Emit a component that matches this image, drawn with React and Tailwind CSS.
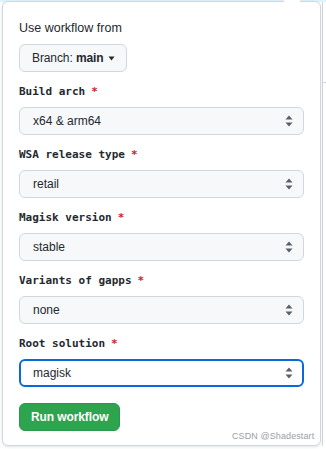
import React from 'react';

const fields = [
    { label: 'Build arch', value: 'x64 & arm64' },
    { label: 'WSA release type', value: 'retail' },
    { label: 'Magisk version', value: 'stable' },
    { label: 'Variants of gapps', value: 'none' },
    { label: 'Root solution', value: 'magisk', focused: true },
];

function UpDown() {
    return (
        <svg width="8" height="12" viewBox="0 0 8 12" className="shrink-0">
            <path d="M4 0.5 L7.5 4.5 L0.5 4.5 Z" fill="#57606a" />
            <path d="M4 11.5 L7.5 7.5 L0.5 7.5 Z" fill="#57606a" />
        </svg>
    );
}

function Field({ label, value, focused }) {
    return (
        <div className="flex flex-col">
            <div className="h-[18px] flex items-center font-['DejaVu_Sans_Mono',monospace] text-[11px] font-bold text-[#24292f]">
                {label}
                <span className="ml-[6px] text-[#cf222e]">*</span>
            </div>
            <div
                className={
                    focused
                        ? 'mt-[6px] h-[28px] rounded-[6px] border-2 border-[#0969da] bg-white flex items-center justify-between pl-[12px] pr-[9px]'
                        : 'mt-[6px] h-[28px] rounded-[6px] border border-[#d0d7de] bg-[#f6f8fa] flex items-center justify-between pl-[13px] pr-[10px]'
                }
            >
                <span className="text-[12px] text-[#24292f]">{value}</span>
                <UpDown />
            </div>
        </div>
    );
}

export default function App() {
    return (
        <div className="w-[326px] h-[449px] bg-white relative overflow-hidden font-['Liberation_Sans',sans-serif]">
            <div className="h-[2px] bg-[#ddf4ff]" />
            <div className="flex">
                <div className="ml-[2px] -mt-[1px] w-[319px] h-[445px] rounded-[6px] border border-[#d0d7de] bg-white shadow-[0_1px_3px_rgba(140,149,159,0.25)] flex flex-col px-[16px] pt-[16px] relative">
                    <div className="absolute -top-[2px] left-[281px] w-[16px] h-[4px] bg-white" />
                    <div className="h-[20px] flex items-center text-[12.5px] text-[#24292f]">Use workflow from</div>
                    <div className="mt-[6px] self-start h-[28px] rounded-[6px] border border-[#d0d7de] bg-[#f6f8fa] flex items-center pl-[12px] pr-[11px] text-[12px] text-[#24292f] tracking-[-0.1px]">
                        Branch:&nbsp;<span className="font-bold">main</span>
                        <svg width="7" height="5" viewBox="0 0 7 5" className="ml-[4px]">
                            <path d="M0.5 0.5 L6.5 0.5 L3.5 4.5 Z" fill="#24292f" />
                        </svg>
                    </div>
                    <div className="mt-[11px] flex flex-col gap-[11px]">
                        {fields.map((f) => (
                            <Field key={f.label} {...f} />
                        ))}
                    </div>
                    <button className="mt-[16px] self-start h-[28px] px-[11px] rounded-[6px] bg-[#2da44e] border border-[#2c974b] text-white text-[12px] font-bold tracking-[-0.1px]">
                        Run workflow
                    </button>
                </div>
                <div className="flex-1 flex flex-col border-l border-[#d0d7de] ml-[1px]">
                    <div className="h-[80px]" />
                    <div className="h-px bg-[#d0d7de]" />
                </div>
            </div>
            <div className="absolute left-[232px] top-[430px] text-[9px] text-[#9aa0a6] font-['Liberation_Sans',sans-serif] tracking-[0.1px]">
                CSDN @Shadestart
            </div>
        </div>
    );
}
